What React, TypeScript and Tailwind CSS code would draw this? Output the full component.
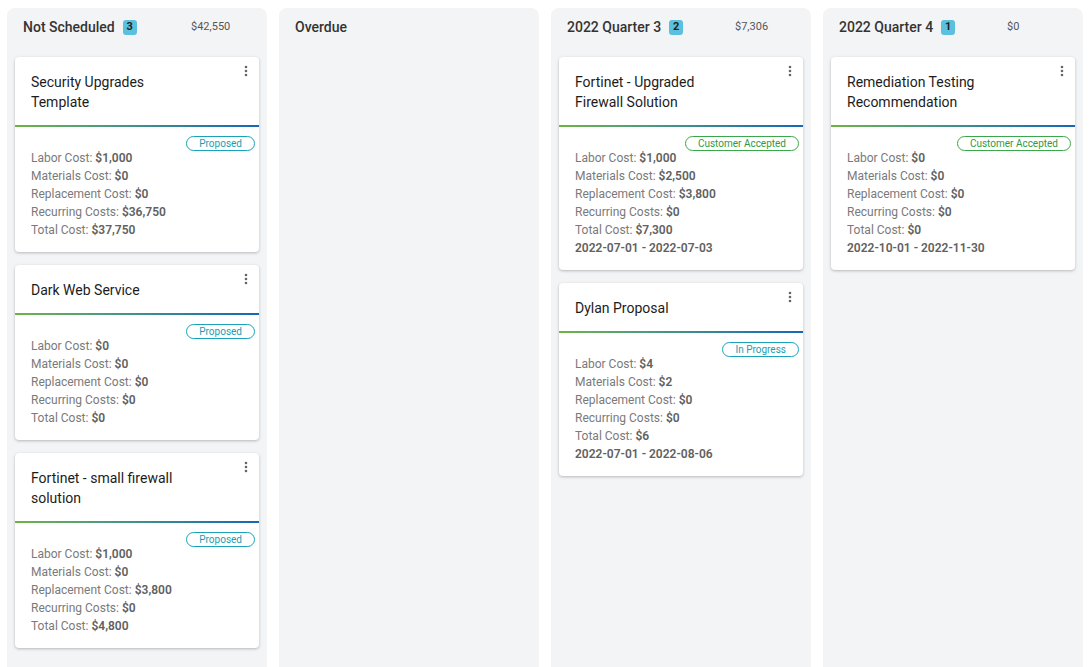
import React from "react";

type Status = "Proposed" | "Customer Accepted" | "In Progress";

interface Card {
  title: string[];
  status: Status;
  labor: string;
  materials: string;
  replacement: string;
  recurring: string;
  total: string;
  dates?: string;
}

interface Column {
  name: string;
  count?: number;
  amount?: string;
  cards: Card[];
}

const columns: Column[] = [
  {
    name: "Not Scheduled",
    count: 3,
    amount: "$42,550",
    cards: [
      { title: ["Security Upgrades", "Template"], status: "Proposed", labor: "$1,000", materials: "$0", replacement: "$0", recurring: "$36,750", total: "$37,750" },
      { title: ["Dark Web Service"], status: "Proposed", labor: "$0", materials: "$0", replacement: "$0", recurring: "$0", total: "$0" },
      { title: ["Fortinet - small firewall", "solution"], status: "Proposed", labor: "$1,000", materials: "$0", replacement: "$3,800", recurring: "$0", total: "$4,800" },
    ],
  },
  { name: "Overdue", cards: [] },
  {
    name: "2022 Quarter 3",
    count: 2,
    amount: "$7,306",
    cards: [
      { title: ["Fortinet - Upgraded", "Firewall Solution"], status: "Customer Accepted", labor: "$1,000", materials: "$2,500", replacement: "$3,800", recurring: "$0", total: "$7,300", dates: "2022-07-01 - 2022-07-03" },
      { title: ["Dylan Proposal"], status: "In Progress", labor: "$4", materials: "$2", replacement: "$0", recurring: "$0", total: "$6", dates: "2022-07-01 - 2022-08-06" },
    ],
  },
  {
    name: "2022 Quarter 4",
    count: 1,
    amount: "$0",
    cards: [
      { title: ["Remediation Testing", "Recommendation"], status: "Customer Accepted", labor: "$0", materials: "$0", replacement: "$0", recurring: "$0", total: "$0", dates: "2022-10-01 - 2022-11-30" },
    ],
  },
];

function StatusPill({ status }: { status: Status }) {
  const cls =
    status === "Customer Accepted"
      ? "border-[#3aa84a] text-[#2f9a3f] px-[12px]"
      : "border-[#1aa3b8] text-[#1a9db3] px-[12px]";
  return (
    <span className={`inline-flex h-[15px] items-center rounded-full border text-[10px] leading-none ${cls}`}>
      {status}
    </span>
  );
}

function Kebab() {
  return (
    <svg width="4" height="12" viewBox="0 0 4 12" className="fill-[#666]">
      <circle cx="2" cy="2" r="1.3" />
      <circle cx="2" cy="6" r="1.3" />
      <circle cx="2" cy="10" r="1.3" />
    </svg>
  );
}

function Row({ label, value }: { label: string; value: string }) {
  return (
    <div className="leading-[18px]">
      <span className="text-[#7a7a7a]">{label}: </span>
      <span className="font-semibold text-[#616161]">{value}</span>
    </div>
  );
}

function ProjectCard({ card }: { card: Card }) {
  return (
    <div className="relative rounded bg-white shadow-[0_1px_3px_rgba(0,0,0,0.25)]">
      <div className="absolute right-[11px] top-[8px]">
        <Kebab />
      </div>
      <div className="px-4 pb-[13px] pt-[15px] text-[14px] leading-[20px] text-[#1c1c1c]">
        {card.title.map((t) => (
          <div key={t}>{t}</div>
        ))}
      </div>
      <div className="h-[2px] bg-gradient-to-r from-[#6fb43f] to-[#1766b8]" />
      <div className="pb-[13px] pl-4 pr-1 pt-[9px] text-[12px]">
        <div className="flex justify-end">
          <StatusPill status={card.status} />
        </div>
        <div className="-mt-[2px]">
          <Row label="Labor Cost" value={card.labor} />
          <Row label="Materials Cost" value={card.materials} />
          <Row label="Replacement Cost" value={card.replacement} />
          <Row label="Recurring Costs" value={card.recurring} />
          <Row label="Total Cost" value={card.total} />
          {card.dates && <div className="font-semibold leading-[18px] text-[#616161]">{card.dates}</div>}
        </div>
      </div>
    </div>
  );
}

function BoardColumn({ col }: { col: Column }) {
  return (
    <div className="flex h-[680px] w-[260px] shrink-0 flex-col rounded-lg bg-[#f3f4f6] px-2">
      <div className="flex h-[38px] items-center px-2">
        <div className="flex w-[168px] items-center gap-2">
          <span className="text-[14px] font-medium text-[#333]">{col.name}</span>
          {col.count !== undefined && (
            <span className="flex h-[15px] min-w-[14px] items-center justify-center rounded-[3px] bg-[#5bc0de] px-[3px] text-[11px] font-bold text-[#222]">
              {col.count}
            </span>
          )}
        </div>
        {col.amount && <span className="text-[11px] text-[#555]">{col.amount}</span>}
      </div>
      <div className="flex flex-col gap-[13px] pt-[11px]">
        {col.cards.map((c) => (
          <ProjectCard key={c.title.join(" ")} card={c} />
        ))}
      </div>
    </div>
  );
}

export default function App() {
  return (
    <div
      className="flex h-[667px] gap-3 overflow-hidden bg-white pl-[7px] pt-2"
      style={{ fontFamily: "Roboto, 'Liberation Sans', sans-serif" }}
    >
      {columns.map((c) => (
        <BoardColumn key={c.name} col={c} />
      ))}
    </div>
  );
}
